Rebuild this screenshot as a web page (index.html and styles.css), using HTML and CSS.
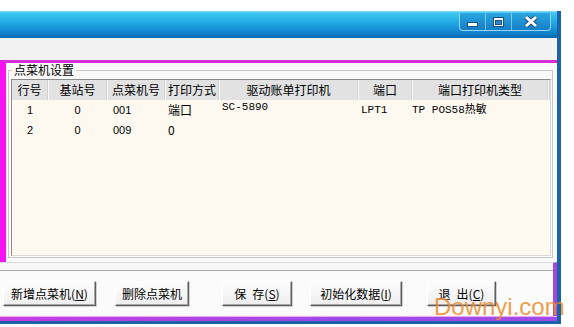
FILE: index.html
```html
<!DOCTYPE html>
<html lang="zh-CN">
  <head>
    <meta charset="UTF-8" />
    <title>点菜机设置</title>
    <link rel="stylesheet" href="styles.css">
  </head>
  <body>
    <div class="window">
      <div class="titlebar">
        <div class="caption-btns">
          <span class="cap-btn cap-min">
            <svg width="25" height="17" viewBox="0 0 25 17">
              <rect x="7.5" y="9.5" width="10" height="4" fill="#fff" stroke="#1d4f80" />
            </svg>
          </span>
          <span class="cap-btn cap-max">
            <svg width="25" height="17" viewBox="0 0 25 17">
              <rect x="7.5" y="4.5" width="10" height="9" fill="#fff" stroke="#1d4f80" />
              <rect x="9.5" y="7.5" width="6" height="4" fill="#2f86c8" stroke="#1d4f80" />
            </svg>
          </span>
          <span class="cap-btn cap-close">
            <svg width="38" height="17" viewBox="0 0 38 17">
              <path d="M14 4 L24 13 M24 4 L14 13" stroke="#1d4f80" stroke-width="5" />
              <path d="M14 4 L24 13 M24 4 L14 13" stroke="#fff" stroke-width="3" />
            </svg>
          </span>
        </div>
      </div>

      <div class="menubar"></div>

      <div class="main">
        <fieldset class="group">
          <legend>点菜机设置</legend>
          <div class="grid">
            <div class="grid-head">
              <span>行号</span>
              <span>基站号</span>
              <span>点菜机号</span>
              <span>打印方式</span>
              <span>驱动账单打印机</span>
              <span>端口</span>
              <span>端口打印机类型</span>
              <span></span>
            </div>
            <div class="grid-row">
              <span>1</span>
              <span>0</span>
              <span>001</span>
              <span>端口</span>
              <span class="mono raised">SC-5890</span>
              <span class="mono">LPT1</span>
              <span class="mono">TP POS58热敏</span>
              <span></span>
            </div>
            <div class="grid-row">
              <span>2</span>
              <span>0</span>
              <span>009</span>
              <span>0</span>
              <span></span>
              <span></span>
              <span></span>
              <span></span>
            </div>
          </div>
        </fieldset>
      </div>

      <div class="footer">
        <div class="btnbar">
          <button class="btn btn-add">新增点菜机(<u>N</u>)</button>
          <button class="btn btn-del">删除点菜机</button>
          <button class="btn btn-save">保&ensp;存(<u>S</u>)</button>
          <button class="btn btn-init">初始化数据(<u>I</u>)</button>
          <button class="btn btn-exit">退&ensp;出(<u>C</u>)</button>
        </div>
      </div>

      <div class="bottom-mark"></div>
    </div>

    <div class="watermark">Downyi.com</div>
  </body>
</html>
```

FILE: styles.css
```css
body {
  margin: 0;
  padding: 11px 0 0 0;
  width: 574px;
  height: 327px;
  overflow: hidden;
  background: #fff;
  font-family: Tahoma, "Liberation Sans", "Noto Sans CJK SC", sans-serif;
  font-size: 12px;
  color: #000;
  position: relative;
}

.window {
  width: 561px;
  box-sizing: border-box;
  border-right: 4px solid #1d62a6;
  border-bottom: 3px solid #1d62a6;
  background: #f2f2f2;
}

.titlebar {
  height: 27px;
  background: linear-gradient(
    to bottom,
    #8adcf6 0%,
    #3cc6f0 8%,
    #22ade6 40%,
    #1488d0 75%,
    #0a68ae 100%
  );
  display: flex;
  justify-content: flex-end;
  align-items: flex-start;
  padding-right: 6px;
  box-sizing: border-box;
}

.caption-btns {
  display: flex;
  margin-top: 2px;
  height: 17px;
  border: 1px solid rgba(190, 230, 250, 0.75);
  border-top: none;
  border-radius: 0 0 4px 4px;
  background: linear-gradient(to bottom, #2aa6e2, #147fc6);
}

.cap-btn {
  display: block;
  height: 17px;
  border-left: 1px solid rgba(190, 230, 250, 0.6);
}

.cap-btn:first-child {
  border-left: none;
}

.cap-btn svg {
  display: block;
}

.menubar {
  height: 22px;
  background: #f2f2f2;
}

.main {
  height: 202px;
  box-sizing: border-box;
  border-top: 3px solid #d62ed6;
  border-left: 6px solid #f712f2;
  background: #f9f9f9;
}

.group {
  margin: 0 4px 0 2px;
  padding: 2px 1px 1px 2px;
  border: 1px solid #c8c8c8;
  min-width: 0;
}

.group legend {
  padding: 0 2px;
  margin-left: 1px;
  line-height: 14px;
  font-family: "Noto Sans CJK SC", sans-serif;
}

.grid {
  height: 177px;
  box-sizing: border-box;
  border: 1px solid #8c8c8c;
  border-right-color: #d8d8d8;
  border-bottom-color: #d8d8d8;
  background: #fdf9f0;
}

.grid-head,
.grid-row {
  display: grid;
  grid-template-columns: 36px 59px 58px 54px 139px 54px 136px 1fr;
}

.grid-head {
  height: 20px;
  background: #e2e2e2;
  font-family: "Noto Sans CJK SC", sans-serif;
}

.grid-head span {
  text-align: center;
  line-height: 20px;
  border-left: 1px solid #f8f8f8;
  border-right: 1px solid #d2d2d2;
}

.grid-head span:first-child {
  border-left: none;
}

.grid-row {
  height: 20px;
}

.grid-row span {
  line-height: 20px;
  padding-left: 3px;
  white-space: nowrap;
  font-size: 11px;
}

.grid-row span:nth-child(1),
.grid-row span:nth-child(2) {
  text-align: center;
  padding-left: 0;
}

.grid-row span:nth-child(3) {
  padding-left: 6px;
}

.grid-row span:nth-child(4) {
  font-size: 12px;
  font-family: "Noto Sans CJK SC", sans-serif;
}

.grid-row span:nth-child(7) {
  padding-left: 0;
}

.grid-row .mono {
  font-family: "Liberation Mono", "Noto Sans CJK SC", monospace;
  font-size: 11px;
}

.grid-row .raised {
  line-height: 14px;
}

.footer {
  height: 54px;
  box-sizing: border-box;
  border-top: 1px solid #dcdcdc;
  border-right: 4px solid #a448d8;
  padding-top: 7px;
  background: #f6f6f6;
}

.btnbar {
  border-top: 1px solid #a6a6a6;
  padding-top: 10px;
  display: flex;
  background: #fbfbfb;
  height: 45px;
  box-sizing: border-box;
}

.btn {
  height: 25px;
  padding: 0;
  font-family: "Noto Sans CJK SC", sans-serif;
  font-size: 12px;
  color: #000;
  background: linear-gradient(to bottom, #fdfdfd, #eeeeee);
  border: 1px solid;
  border-color: #ffffff #5e5e5e #5e5e5e #ffffff;
  box-shadow: inset -1px -1px 0 #a8a8a8, 1px 1px 0 #d0d0d0;
}

.btn-add {
  width: 93px;
  margin-left: 3px;
}

.btn-del {
  width: 74px;
  margin-left: 19px;
}

.btn-save {
  width: 70px;
  margin-left: 33px;
}

.btn-init {
  width: 92px;
  margin-left: 18px;
}

.btn-exit {
  width: 69px;
  margin-left: 25px;
}

.bottom-mark {
  height: 5px;
  box-sizing: border-box;
  border-top: 1px solid #f2a8f2;
  background: linear-gradient(to right, #c63ee0, #9c4ae6 60%, #a04ce8);
}

.watermark {
  position: absolute;
  left: 434px;
  top: 293px;
  font-family: "Liberation Sans", Arial, sans-serif;
  font-size: 24px;
  line-height: 28px;
  color: rgba(234, 140, 40, 0.85);
  pointer-events: none;
}
```
